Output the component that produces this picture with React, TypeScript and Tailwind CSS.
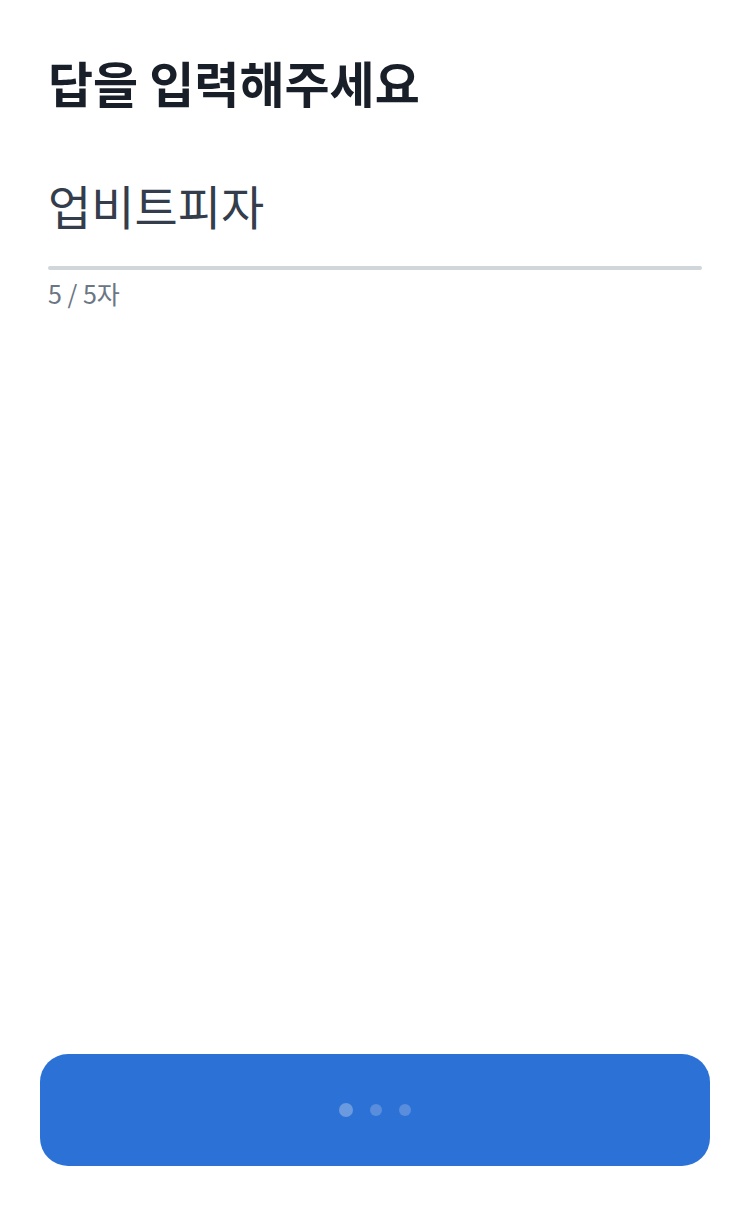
const font = 'font-["Noto_Sans_CJK_KR","Noto_Sans",sans-serif]';

export default function App() {
  return (
    <div className={`${font} w-[750px] h-[1206px] bg-white flex flex-col`}>
      <div className="px-12 pt-[49px] flex flex-col">
        <h1 className="text-[49px] leading-[66px] font-bold text-[#191f28]">
          답을 입력해주세요
        </h1>

        {/* Input */}
        <div className="mt-[60px] flex flex-col">
          <div className="text-[47px] leading-[60px] text-[#333d4b]">업비트피자</div>
          <div className="mt-[31px] h-1 w-full rounded-full bg-[#d1d6db]" />
          <div className="mt-[8px] text-[25px] leading-[30px] text-[#6b7684]">5 / 5자</div>
        </div>
      </div>

      <div className="mt-auto px-10 pb-10">
        <button className="w-full h-[112px] rounded-[28px] bg-[#2c72d6] flex items-center justify-center gap-[17px]">
          <span className="w-[14px] h-[14px] rounded-full bg-[#6b9ade]" />
          <span className="w-3 h-3 rounded-full bg-[#5a8ddb]" />
          <span className="w-3 h-3 rounded-full bg-[#5a8ddb]" />
        </button>
      </div>
    </div>
  );
}
